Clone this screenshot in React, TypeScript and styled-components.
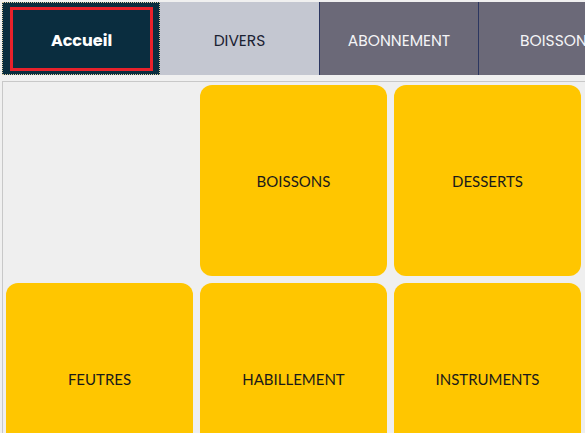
import React from "react";
import styled, { createGlobalStyle } from "styled-components";

const Global = createGlobalStyle`
  html, body { margin: 0; padding: 0; background: #f0f0f0; }
  body { font-family: "Open Sans", sans-serif; overflow: hidden; }
`;

const Page = styled.div`
  padding-top: 2px;
  width: 585px;
  height: 433px;
  box-sizing: border-box;
  overflow: hidden;
`;

const TabBar = styled.div`
  display: flex;
  height: 73px;
  padding-left: 2px;
  overflow: hidden;
  white-space: nowrap;
`;

type Variant = "active" | "light" | "dark";

const Tab = styled.div<{ $variant: Variant }>`
  flex: 0 0 ${(p) => (p.$variant === "active" ? "158px" : "159px")};
  box-sizing: border-box;
  height: 73px;
  display: flex;
  align-items: center;
  justify-content: center;
  font-family: "Poppins", "Open Sans", sans-serif;
  font-size: 15.5px;
  background: ${(p) =>
    p.$variant === "active" ? "#0a2d3f" : p.$variant === "light" ? "#c4c7d1" : "#6b6978"};
  color: ${(p) => (p.$variant === "light" ? "#1b2233" : "#f4f4f6")};
  border-left: ${(p) => (p.$variant === "dark" ? "1px solid #2b3660" : "none")};
  outline: ${(p) => (p.$variant === "active" ? "1px dotted #d9c9a0" : "none")};
  outline-offset: -1px;
  padding: ${(p) => (p.$variant === "active" ? "5px 7px 4px 8px" : "3px 0 0 0")};
`;

const ActiveFrame = styled.div`
  flex: 1;
  align-self: stretch;
  border: 3px solid #e8212b;
  display: flex;
  align-items: center;
  justify-content: center;
  padding-top: 2px;
  font-weight: 700;
  font-size: 16px;
  color: #ffffff;
`;

const Panel = styled.div`
  margin-top: 6px;
  margin-left: 2px;
  border-top: 1px solid #c8c8c8;
  border-left: 1px solid #c8c8c8;
  padding: 3px;
  background: #efefef;
  height: 400px;
`;

const Grid = styled.div`
  display: grid;
  grid-template-columns: repeat(3, 187px);
  grid-auto-rows: 191px;
  gap: 7px;
`;

const Card = styled.div<{ $empty?: boolean }>`
  border-radius: 12px;
  background: ${(p) => (p.$empty ? "transparent" : "#ffc600")};
  display: flex;
  align-items: center;
  justify-content: center;
  font-family: Lato, "Open Sans", sans-serif;
  font-size: 15px;
  color: #1a1a1a;
  padding-top: 1px;
  box-sizing: border-box;
`;

const cards = ["", "BOISSONS", "DESSERTS", "FEUTRES", "HABILLEMENT", "INSTRUMENTS"];

export default function App() {
  return (
    <Page>
      <Global />
      <TabBar>
        <Tab $variant="active">
          <ActiveFrame>Accueil</ActiveFrame>
        </Tab>
        <Tab $variant="light">DIVERS</Tab>
        <Tab $variant="dark">ABONNEMENT</Tab>
        <Tab $variant="dark">BOISSONS</Tab>
      </TabBar>
      <Panel>
        <Grid>
          {cards.map((c, i) => (
            <Card key={i} $empty={c === ""}>
              {c}
            </Card>
          ))}
        </Grid>
      </Panel>
    </Page>
  );
}
